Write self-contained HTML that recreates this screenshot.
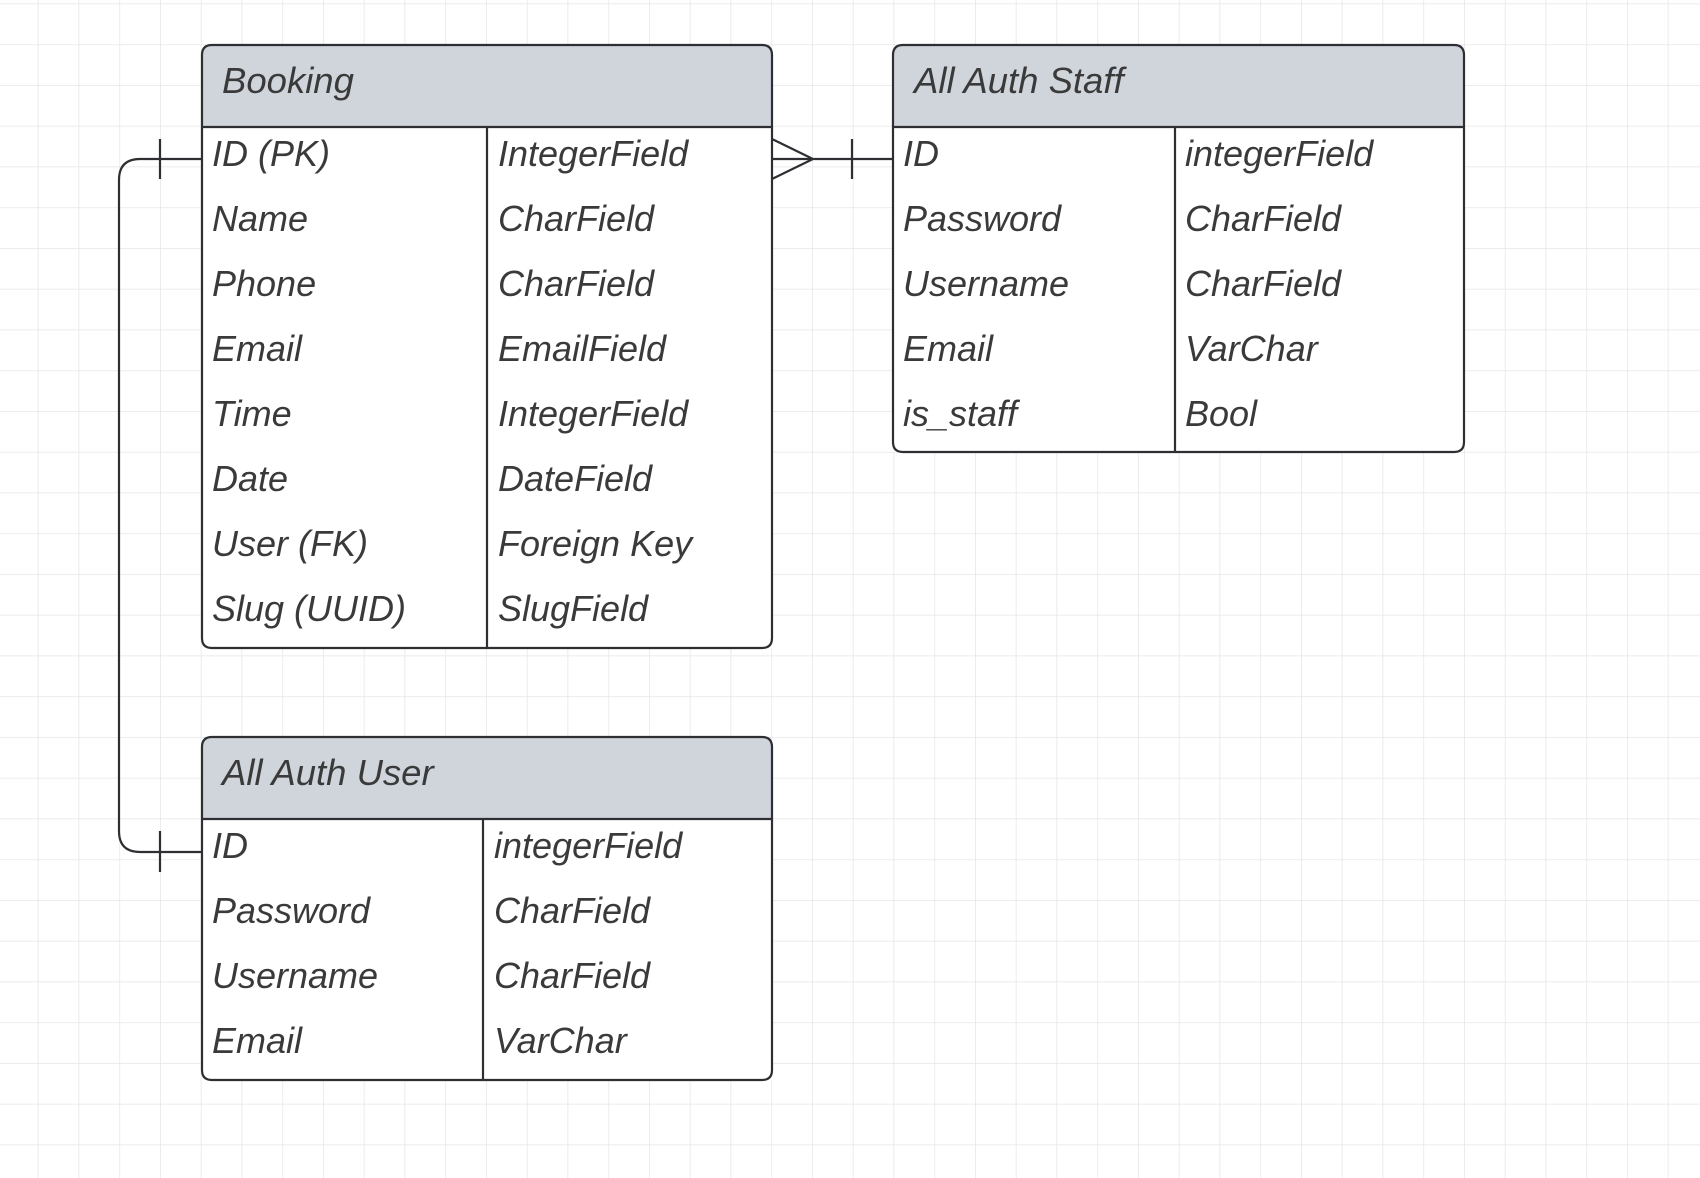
<!DOCTYPE html>
<html><head><meta charset="utf-8"><style>
html,body{margin:0;padding:0;background:#fff;}
svg{display:block;}
text{font-family:"Liberation Sans",Arial,sans-serif;font-style:italic;font-size:36px;fill:#3a3a3a;}
text.h{font-size:36.5px;}
</style></head><body>
<svg width="1700" height="1178" viewBox="0 0 1700 1178" xmlns="http://www.w3.org/2000/svg">
<defs>
<pattern id="g" x="37.75" y="3.5" width="40.75" height="40.75" patternUnits="userSpaceOnUse">
<path d="M0 0H40.75M0 0V40.75" stroke="#e6e6e6" stroke-width="1.5" fill="none"/>
</pattern>
</defs>
<rect width="1700" height="1178" fill="url(#g)"/>

<g stroke="#2d2f33" stroke-width="2.2" fill="none">
<path d="M202 159H140Q119 159 119 180V831Q119 852 140 852H202"/>
<path d="M160 139V179M160 831V872"/>
<path d="M772 159H893M772 139L813 159L772 179M852 139V179"/>
</g>

<g>
<path d="M202 127V55Q202 45 212 45H762Q772 45 772 55V127Z" fill="#d0d4db"/>
<rect x="202" y="127" width="570" height="521" fill="#fff"/>
<path d="M212 45H762Q772 45 772 55V638Q772 648 762 648H212Q202 648 202 638V55Q202 45 212 45ZM202 127H772M487 127V648" stroke="#2d2f33" stroke-width="2.2" fill="none"/>
<text class="h" x="222" y="93">Booking</text>
<text x="212" y="166">ID (PK)</text><text x="498" y="166">IntegerField</text>
<text x="212" y="231">Name</text><text x="498" y="231">CharField</text>
<text x="212" y="296">Phone</text><text x="498" y="296">CharField</text>
<text x="212" y="361">Email</text><text x="498" y="361">EmailField</text>
<text x="212" y="426">Time</text><text x="498" y="426">IntegerField</text>
<text x="212" y="491">Date</text><text x="498" y="491">DateField</text>
<text x="212" y="556">User (FK)</text><text x="498" y="556">Foreign Key</text>
<text x="212" y="621">Slug (UUID)</text><text x="498" y="621">SlugField</text>
</g>

<g>
<path d="M893 127V55Q893 45 903 45H1454Q1464 45 1464 55V127Z" fill="#d0d4db"/>
<rect x="893" y="127" width="571" height="325" fill="#fff"/>
<path d="M903 45H1454Q1464 45 1464 55V442Q1464 452 1454 452H903Q893 452 893 442V55Q893 45 903 45ZM893 127H1464M1175 127V452" stroke="#2d2f33" stroke-width="2.2" fill="none"/>
<text class="h" x="914" y="93">All Auth Staff</text>
<text x="903" y="166">ID</text><text x="1185" y="166">integerField</text>
<text x="903" y="231">Password</text><text x="1185" y="231">CharField</text>
<text x="903" y="296">Username</text><text x="1185" y="296">CharField</text>
<text x="903" y="361">Email</text><text x="1185" y="361">VarChar</text>
<text x="903" y="426">is_staff</text><text x="1185" y="426">Bool</text>
</g>

<g>
<path d="M202 819V747Q202 737 212 737H762Q772 737 772 747V819Z" fill="#d0d4db"/>
<rect x="202" y="819" width="570" height="261" fill="#fff"/>
<path d="M212 737H762Q772 737 772 747V1070Q772 1080 762 1080H212Q202 1080 202 1070V747Q202 737 212 737ZM202 819H772M483 819V1080" stroke="#2d2f33" stroke-width="2.2" fill="none"/>
<text class="h" x="222" y="785">All Auth User</text>
<text x="212" y="858">ID</text><text x="494" y="858">integerField</text>
<text x="212" y="923">Password</text><text x="494" y="923">CharField</text>
<text x="212" y="988">Username</text><text x="494" y="988">CharField</text>
<text x="212" y="1053">Email</text><text x="494" y="1053">VarChar</text>
</g>
</svg>
</body></html>
